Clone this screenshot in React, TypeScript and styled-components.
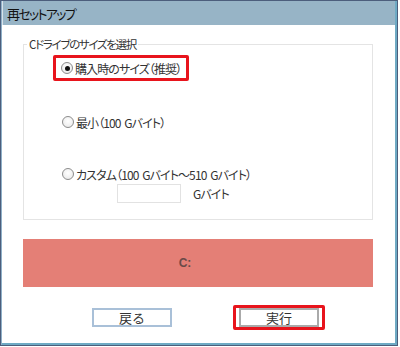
import React, { useState } from "react";
import styled, { createGlobalStyle } from "styled-components";

const GlobalStyle = createGlobalStyle`
  html, body {
    margin: 0;
    padding: 0;
    background: #ffffff;
  }

  body {
    font-family: "Noto Sans CJK JP", "Noto Sans", sans-serif;
    font-feature-settings: "palt";
    color: #333333;
  }
`;

const sizeOptions = [
  { id: "default", label: "購入時のサイズ（推奨）" },
  { id: "min", label: "最小（100 Gバイト）" },
  { id: "custom", label: "カスタム（100 Gバイト～510 Gバイト）" }
];

const App = () => {
  const [selected, setSelected] = useState("default");
  const [customSize, setCustomSize] = useState("");

  return (
    <>
      <GlobalStyle />

      <Window>
        <TitleBar>再セットアップ</TitleBar>

        <Body>
          <SizeGroup>
            <GroupLegend>Cドライブのサイズを選択</GroupLegend>

            {sizeOptions.map((option, i) => {
              const row = (
                <OptionLabel key={option.id} $index={i}>
                  <Radio
                    name="size"
                    checked={selected === option.id}
                    onChange={() => setSelected(option.id)}
                  />

                  {option.label}
                </OptionLabel>
              );

              // the recommended option is framed in red
              return i === 0 ? (
                <Highlight key={option.id}>{row}</Highlight>
              ) : row;
            })}

            <CustomRow>
              <SizeInput
                value={customSize}
                onChange={(e) => setCustomSize(e.target.value)}
              />
              Gバイト
            </CustomRow>
          </SizeGroup>

          <DriveBar>C:</DriveBar>

          <ButtonRow>
            <DialogButton $tone="blue">戻る</DialogButton>

            <Highlight $button>
              <DialogButton $tone="grey">実行</DialogButton>
            </Highlight>
          </ButtonRow>
        </Body>
      </Window>
    </>
  );
};

const Window = styled.div`
  box-sizing: border-box;
  display: flex;
  flex-direction: column;
  width: 398px;
  height: 346px;
  border: 1px solid #4c5e7c;
  background: #ffffff;
  box-shadow:
    inset 1px 0 0 #8fb0c8,
    inset -2px -2px 0 #6eaac4;
`;

const TitleBar = styled.div`
  display: flex;
  align-items: center;
  height: 24px;
  margin: 0 2px 0 1px;
  padding-left: 4px;
  background: #97b4c6;
  border-left: 1px solid #d8e2ea;
  font-size: 13px;
  letter-spacing: -1.7px;
  color: #111111;
`;

const Body = styled.div`
  display: flex;
  flex-direction: column;
  padding: 11px 24px 0 22px;
`;

const SizeGroup = styled.fieldset`
  display: flex;
  flex-direction: column;
  align-items: flex-start;
  margin: 0;
  padding: 3px 0 16px 30px;
  border: 1px solid #e4e4e4;
  min-width: 0;
`;

const GroupLegend = styled.legend`
  margin-left: -27px;
  padding: 0 2px;
  font-size: 11.5px;
  letter-spacing: -1.3px;
  color: #333333;
`;

const Highlight = styled.div<{ $button?: boolean }>`
  display: flex;
  align-items: center;
  border: 3px solid #e8141c;
  border-radius: 2px;
  margin-left: ${p => p.$button ? "0" : "-1px"};
  padding: ${p => p.$button ? "0 3px" : "2px 5px 2px 5px"};
`;

const OptionLabel = styled.label<{ $index: number }>`
  display: flex;
  align-items: center;
  gap: 2px;
  height: 16px;
  margin-top: ${p => p.$index === 1 ? "33px" : p.$index === 2 ? "36px" : "0"};
  margin-left: ${p => p.$index === 0 ? "0" : "8px"};
  font-size: 12px;
  letter-spacing: -0.9px;
  word-spacing: 2px;
  color: #333333;
  white-space: nowrap;
  cursor: pointer;
`;

const Radio = styled.input.attrs({ type: "radio" })`
  appearance: none;
  box-sizing: border-box;
  display: grid;
  place-items: center;
  width: 12px;
  height: 12px;
  margin: 0;
  border: 1px solid #8c8c8c;
  border-radius: 50%;
  background: radial-gradient(circle at 50% 40%, #ffffff, #e6e6e6);

  &:checked::after {
    content: "";
    width: 5px;
    height: 5px;
    border-radius: 50%;
    background: #111111;
  }
`;

const CustomRow = styled.div`
  display: flex;
  align-items: center;
  gap: 12px;
  margin: 2px 0 0 63px;
  font-size: 12px;
  letter-spacing: -0.9px;
  color: #333333;
`;

const SizeInput = styled.input`
  box-sizing: border-box;
  width: 64px;
  height: 19px;
  border: 1px solid #e2e2e2;
  padding: 0 4px;
  outline: none;
`;

const DriveBar = styled.div`
  display: flex;
  align-items: center;
  justify-content: center;
  height: 48px;
  margin-top: 19px;
  padding-right: 26px;
  background: #e47f76;
  font-family: "Liberation Sans", Arial, sans-serif;
  font-size: 12px;
  font-weight: bold;
  color: #6a4a48;
`;

const ButtonRow = styled.div`
  display: flex;
  align-items: center;
  gap: 61px;
  margin-top: 18px;
  padding-left: 69px;
`;

const DialogButton = styled.button<{ $tone: "blue" | "grey" }>`
  box-sizing: border-box;
  width: 80px;
  height: 19px;
  padding: 0;
  border: 2px solid ${p => p.$tone === "blue" ? "#a9c0d8" : "#aaaaaa"};
  background: #ffffff;
  font-family: inherit;
  font-size: 13px;
  line-height: 1;
  color: #333333;
  cursor: pointer;
`;

export default App;
